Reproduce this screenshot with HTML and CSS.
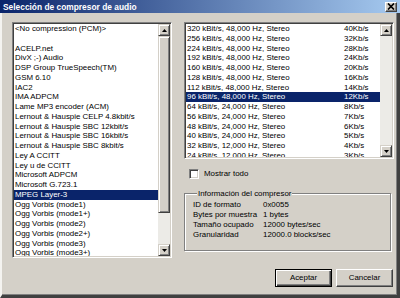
FILE: index.html
```html
<!DOCTYPE html>
<html lang="es">
<head>
<meta charset="utf-8">
<title>Selección de compresor de audio</title>
<link rel="stylesheet" href="styles.css">
</head>
<body>
<div class="window">
  <div class="titlebar">
    <span class="title">Selección de compresor de audio</span>
    <span class="close"><svg width="8" height="7" viewBox="0 0 8 7"><path d="M1 0.5 L7 6.5 M7 0.5 L1 6.5" stroke="#000" stroke-width="1.7" fill="none"/></svg></span>
  </div>
  <div class="client">
    <div class="main">
      <div class="listbox codecs">
        <div class="items">
          <div class="item">&lt;No compression (PCM)&gt;</div>
          <div class="item"></div>
          <div class="item">ACELP.net</div>
          <div class="item">DivX ;-) Audio</div>
          <div class="item">DSP Group TrueSpeech(TM)</div>
          <div class="item">GSM 6.10</div>
          <div class="item">IAC2</div>
          <div class="item">IMA ADPCM</div>
          <div class="item">Lame MP3 encoder (ACM)</div>
          <div class="item">Lernout &amp; Hauspie CELP 4.8kbit/s</div>
          <div class="item">Lernout &amp; Hauspie SBC 12kbit/s</div>
          <div class="item">Lernout &amp; Hauspie SBC 16kbit/s</div>
          <div class="item">Lernout &amp; Hauspie SBC 8kbit/s</div>
          <div class="item">Ley A CCITT</div>
          <div class="item">Ley u de CCITT</div>
          <div class="item">Microsoft ADPCM</div>
          <div class="item">Microsoft G.723.1</div>
          <div class="item selected">MPEG Layer-3</div>
          <div class="item">Ogg Vorbis (mode1)</div>
          <div class="item">Ogg Vorbis (mode1+)</div>
          <div class="item">Ogg Vorbis (mode2)</div>
          <div class="item">Ogg Vorbis (mode2+)</div>
          <div class="item">Ogg Vorbis (mode3)</div>
          <div class="item">Ogg Vorbis (mode3+)</div>
        </div>
        <div class="vscroll">
          <span class="arrow"><svg width="5" height="3" viewBox="0 0 5 3"><polygon points="2.5,0 5,3 0,3" fill="#000"/></svg></span>
          <div class="track"><div class="thumb thumb-codecs"></div></div>
          <span class="arrow"><svg width="5" height="3" viewBox="0 0 5 3"><polygon points="0,0 5,0 2.5,3" fill="#000"/></svg></span>
        </div>
      </div>
      <div class="side">
        <div class="listbox formats">
          <div class="items">
            <div class="row"><span>320 kBit/s, 48,000 Hz, Stereo</span><span>40Kb/s</span></div>
            <div class="row"><span>256 kBit/s, 48,000 Hz, Stereo</span><span>32Kb/s</span></div>
            <div class="row"><span>224 kBit/s, 48,000 Hz, Stereo</span><span>28Kb/s</span></div>
            <div class="row"><span>192 kBit/s, 48,000 Hz, Stereo</span><span>24Kb/s</span></div>
            <div class="row"><span>160 kBit/s, 48,000 Hz, Stereo</span><span>20Kb/s</span></div>
            <div class="row"><span>128 kBit/s, 48,000 Hz, Stereo</span><span>16Kb/s</span></div>
            <div class="row"><span>112 kBit/s, 48,000 Hz, Stereo</span><span>14Kb/s</span></div>
            <div class="row selected"><span>96 kBit/s, 48,000 Hz, Stereo</span><span>12Kb/s</span></div>
            <div class="row"><span>64 kBit/s, 24,000 Hz, Stereo</span><span>8Kb/s</span></div>
            <div class="row"><span>56 kBit/s, 24,000 Hz, Stereo</span><span>7Kb/s</span></div>
            <div class="row"><span>48 kBit/s, 24,000 Hz, Stereo</span><span>6Kb/s</span></div>
            <div class="row"><span>40 kBit/s, 24,000 Hz, Stereo</span><span>5Kb/s</span></div>
            <div class="row"><span>32 kBit/s, 12,000 Hz, Stereo</span><span>4Kb/s</span></div>
            <div class="row"><span>24 kBit/s, 12,000 Hz, Stereo</span><span>3Kb/s</span></div>
          </div>
          <div class="vscroll">
            <span class="arrow"><svg width="5" height="3" viewBox="0 0 5 3"><polygon points="2.5,0 5,3 0,3" fill="#000"/></svg></span>
            <div class="track"></div>
            <span class="arrow"><svg width="5" height="3" viewBox="0 0 5 3"><polygon points="0,0 5,0 2.5,3" fill="#000"/></svg></span>
          </div>
        </div>
        <label class="check"><span class="box"></span>Mostrar todo</label>
        <fieldset class="group">
          <legend>Información del compresor</legend>
          <dl class="info">
            <dt>ID de formato</dt><dd>0x0055</dd>
            <dt>Bytes por muestra</dt><dd>1 bytes</dd>
            <dt>Tamaño ocupado</dt><dd>12000 bytes/sec</dd>
            <dt>Granularidad</dt><dd>12000.0 blocks/sec</dd>
          </dl>
        </fieldset>
      </div>
    </div>
    <div class="buttons">
      <button class="btn default">Aceptar</button>
      <button class="btn">Cancelar</button>
    </div>
  </div>
</div>
</body>
</html>
```

FILE: styles.css
```css
* { box-sizing: border-box; margin: 0; padding: 0; }
html, body { width: 400px; height: 298px; overflow: hidden; background: #d4d0c8; }
body {
  font-family: "Liberation Sans", Arial, sans-serif;
  font-size: 7.9px;
  line-height: 9.75px;
  color: #000;
}
.window {
  width: 400px;
  height: 298px;
  display: flex;
  flex-direction: column;
  background: #d4d0c8;
}
.titlebar {
  height: 13px;
  flex: none;
  display: flex;
  align-items: center;
  justify-content: space-between;
  padding: 0 3px 0 3px;
  background: linear-gradient(to right, #0a246a, #a6caf0);
}
.title {
  color: #fff;
  font-weight: bold;
  font-size: 8.4px;
  line-height: 10px;
}
.close {
  width: 12px;
  height: 10px;
  display: flex;
  align-items: center;
  justify-content: center;
  background: #d4d0c8;
  border: 1px solid;
  border-color: #fff #404040 #404040 #fff;
  box-shadow: inset -1px -1px #808080;
}
.client {
  flex: 1;
  display: flex;
  flex-direction: column;
  padding: 9px 3px 0 10px;
  border-left: 2px solid #f4f3f0;
  border-right: 3px solid #404040;
  border-bottom: 3px solid #404040;
  box-shadow: inset -1px -1px #808080;
}
.main {
  display: flex;
  gap: 12px;
  height: 236px;
  flex: none;
}
.listbox {
  display: flex;
  background: #fff;
  border: 1px solid;
  border-color: #808080 #fff #fff #808080;
  box-shadow: inset 1px 1px #404040, inset -1px -1px #d4d0c8;
  padding: 1px;
  overflow: hidden;
}
.items {
  flex: 1;
  min-width: 0;
  overflow: hidden;
}
.item, .row {
  height: 9.75px;
  padding-left: 1px;
  white-space: nowrap;
}
.selected {
  background: #0a246a;
  color: #fff;
}
.codecs {
  width: 160px;
  flex: none;
}
.vscroll {
  width: 12px;
  flex: none;
  display: flex;
  flex-direction: column;
}
.arrow, .thumb {
  background: #d4d0c8;
  border: 1px solid;
  border-color: #d4d0c8 #404040 #404040 #d4d0c8;
  box-shadow: inset 1px 1px #fff, inset -1px -1px #808080;
}
.arrow {
  height: 12px;
  flex: none;
  display: flex;
  align-items: center;
  justify-content: center;
}
.track {
  flex: 1;
  background: #ecebe7;
}
.thumb-codecs { height: 177px; }
.side {
  flex: 1;
  min-width: 0;
  display: flex;
  flex-direction: column;
}
.formats {
  height: 137px;
  flex: none;
}
.row {
  display: grid;
  grid-template-columns: 157px auto;
}
.check {
  display: flex;
  align-items: center;
  gap: 5px;
  height: 10px;
  margin-top: 10px;
  padding-left: 5px;
}
.box {
  width: 10px;
  height: 10px;
  background: #fff;
  border: 1px solid;
  border-color: #808080 #fff #fff #808080;
  box-shadow: inset 1px 1px #404040, inset -1px -1px #d4d0c8;
}
.group {
  margin-top: 10px;
  margin-right: 3px;
  height: 62px;
  border: 1px solid #808080;
  box-shadow: inset 1px 1px #fff, 1px 1px #fff;
  padding: 1.5px 0 0 8px;
}
.group legend {
  margin-left: 4px;
  padding: 0 1px;
  line-height: 9.75px;
  background: #d4d0c8;
}
.info {
  display: grid;
  grid-template-columns: 70px auto;
}
.info dt, .info dd {
  height: 9.75px;
  white-space: nowrap;
}
.buttons {
  display: flex;
  justify-content: flex-end;
  gap: 4px;
  margin-top: 11px;
  padding-right: 1px;
}
.btn {
  width: 57px;
  height: 18px;
  font: inherit;
  color: #000;
  background: #d4d0c8;
  border: 1px solid;
  border-color: #fff #404040 #404040 #fff;
  box-shadow: inset -1px -1px #808080;
}
.btn.default {
  border: 1px solid #000;
  box-shadow: inset 1px 1px #fff, inset -1px -1px #404040, inset -2px -2px #808080;
}
```
